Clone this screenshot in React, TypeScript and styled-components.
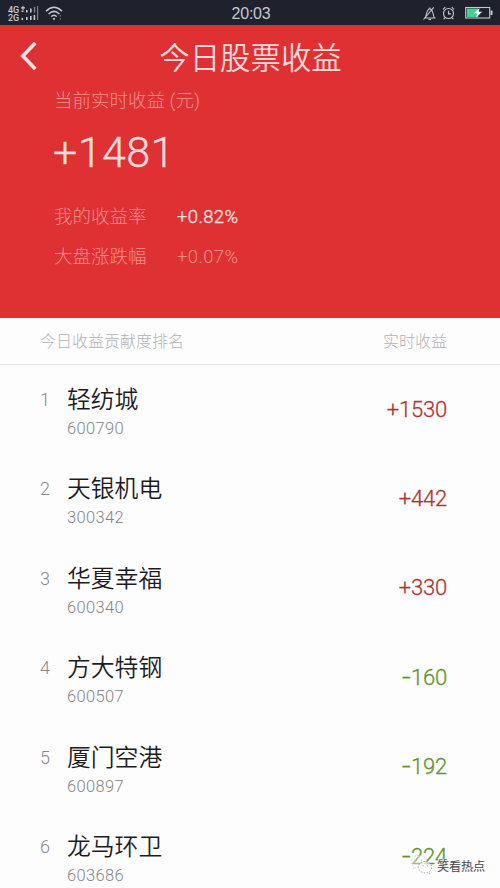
import React from "react";
import styled, { createGlobalStyle } from "styled-components";

const Global = createGlobalStyle`
  * { box-sizing: border-box; }
  html, body { margin: 0; padding: 0; overflow: hidden; }
  body { font-family: Roboto, "Noto Sans CJK SC", sans-serif; background: #fefdfe; }
`;

const Screen = styled.main`
  position: relative;
  width: 500px;
  height: 888px;
  overflow: hidden;
  display: flex;
  flex-direction: column;
  background: #fefdfe;
`;

const StatusBar = styled.header`
  flex: none;
  height: 25px;
  display: grid;
  grid-template-columns: 1fr auto 1fr;
  align-items: center;
  padding: 2px 6px 0 8px;
  background: #1f222d;
  color: #c5c8d0;
`;

const StatusGroup = styled.div<{ $end?: boolean }>`
  display: flex;
  align-items: center;
  justify-content: ${(p) => (p.$end ? "flex-end" : "flex-start")};
`;

const Networks = styled.div`
  display: flex;
  flex-direction: column;
  font: 500 9px/8px Roboto, sans-serif;
  width: 13px;
`;

const Clock = styled.time`
  padding-top: 1px;
  font: 400 16px/22px "Liberation Sans", sans-serif;
  letter-spacing: -0.25px;
`;

const Hero = styled.section`
  flex: none;
  height: 293px;
  background: #df3033;
  color: #ffdcdc;
`;

const TitleBar = styled.div`
  height: 64px;
  display: grid;
  grid-template-columns: 60px 1fr 60px;
  align-items: center;
`;

const BackButton = styled.button`
  display: flex;
  border: 0;
  padding: 0 0 2px 20px;
  background: none;
`;

const Title = styled.h1`
  margin: 4px 0 0 1px;
  text-align: center;
  font-size: 30.4px;
  line-height: 40px;
  font-weight: 350;
  white-space: nowrap;
`;

const Summary = styled.div`
  display: flex;
  flex-direction: column;
  padding-left: 54px;
`;

const SummaryLabel = styled.div`
  height: 22px;
  font-size: 18.5px;
  line-height: 24px;
  font-weight: 300;
  color: #f58f8b;
`;

const Total = styled.div`
  margin: 16px 0 0 -1px;
  height: 50px;
  font-size: 43px;
  line-height: 50px;
  font-weight: 300;
  letter-spacing: 0.4px;
  -webkit-text-stroke: 0.4px #ffdcdc;
`;

const Rates = styled.dl`
  margin: 20px 0 0;
  display: grid;
  grid-template-columns: 123px 1fr;
  grid-auto-rows: 40px;
  align-items: center;
`;

const RateLabel = styled.dt`
  font-size: 18.5px;
  line-height: 24px;
  font-weight: 300;
  color: #f58f8b;
`;

const RateValue = styled.dd<{ $bright?: boolean }>`
  margin: 0;
  font-size: 18.4px;
  line-height: 24px;
  letter-spacing: 0.4px;
  font-weight: 300;
  color: ${(p) => (p.$bright ? "#ffe3e1" : "#f5918c")};
  -webkit-text-stroke: ${(p) => (p.$bright ? "0.4px" : "0")} #ffe3e1;
`;

const ListHead = styled.div`
  flex: none;
  height: 47px;
  display: flex;
  justify-content: space-between;
  align-items: center;
  padding: 0 53px 2px 40px;
  border-bottom: 1px solid #e3e3e6;
  font-size: 16px;
  font-weight: 300;
  color: #b2b2b5;
`;

const List = styled.ol`
  margin: 0;
  padding: 0;
  list-style: none;
`;

const Row = styled.li`
  height: 89.4px;
  display: grid;
  grid-template-columns: 27px 1fr auto;
  padding: 0 53px 0 40px;
`;

const Rank = styled.span`
  padding-top: 24px;
  font-size: 18px;
  line-height: 22px;
  font-weight: 300;
  color: #88888b;
`;

const Stock = styled.div`
  padding-top: 19px;
`;

const StockName = styled.div`
  height: 32px;
  font-size: 23.8px;
  line-height: 32px;
  font-weight: 350;
  color: #1c1c1f;
`;

const StockCode = styled.div`
  margin-top: 3px;
  font-size: 16.5px;
  line-height: 20px;
  font-weight: 300;
  letter-spacing: 0.35px;
  color: #858588;
`;

const Profit = styled.div<{ $loss: boolean }>`
  display: flex;
  align-self: center;
  font-size: 22px;
  line-height: 26px;
  font-weight: 300;
  letter-spacing: -0.2px;
  color: ${(p) => (p.$loss ? "#639528" : "#b43132")};
  -webkit-text-stroke: 0.3px ${(p) => (p.$loss ? "#639528" : "#b43132")};
`;

const Sign = styled.span<{ $loss: boolean }>`
  font-size: ${(p) => (p.$loss ? "18px" : "22px")};
  font-weight: ${(p) => (p.$loss ? 400 : 300)};
`;

const Watermark = styled.div`
  position: absolute;
  left: 410px;
  top: 853px;
  display: flex;
  align-items: center;
  gap: 4px;
`;

const WatermarkText = styled.span`
  padding-top: 4px;
  font-size: 12px;
  line-height: 20px;
  font-weight: 400;
  color: #4a4a4c;
  text-shadow: -1px -1px 0 #fff, 1px 0 0 #ddd;
`;

const SignalIcon = () => (
  <svg width="18" height="15" viewBox="0 0 18 15" fill="#c5c8d0">
    <path d="M0 1.2h4v1.2H0zM1.4 0h1.2v4H1.4zM.5 4.5h2V6h-2zM5 4h1.6v2.4H5zM9 2.5h1.6v3.9H9zM.5 12h1.6v2H.5zM5 11h1.6v3H5zM9 10h1.6v4H9zM12.6 9h1.6v5h-1.6z" />
    <path d="M12.8.8h1.5v5.6h-1.5zM16 0h1.2v14H16z" opacity=".55" />
  </svg>
);

const WifiIcon = () => (
  <svg width="18" height="15" viewBox="0 0 18 15" fill="none" stroke="#c5c8d0" strokeWidth="1.5">
    <path d="M1 5.2Q9-2.6 17 5.2M3.6 8Q9 2.8 14.4 8M6.3 10.6Q9 8 11.7 10.6" />
    <circle cx="9" cy="12.8" r="1.1" fill="#c5c8d0" stroke="none" />
    <path d="M15.3 9v1.5M15.3 12v1.5" strokeWidth="1" opacity=".6" />
  </svg>
);

const StatusIcons = () => (
  <svg width="72" height="16" viewBox="0 0 72 16" fill="none" stroke="#c5c8d0" strokeWidth="1.1">
    <path d="M2 12H13.500M3.200 11.700C5 9 4 3.700 7.800 2.800 11.600 3.700 10.600 9 12.400 11.700M7.800 2.800V1.500M6.500 13.500h2.600M1.500 13.500 11.800 1.300" />
    <circle cx="26.500" cy="7.500" r="5" />
    <path d="M26.500 4.700v3.200H29M21 3.400l2.300-2.300M32 3.400l-2.300-2.300M23 11.700l-1.300 1.500M30 11.700l1.300 1.500" />
    <rect x="43.700" y="1.500" width="24" height="10.500" />
    <path d="M69.500 4.500V9" strokeWidth="2" />
    <path d="M44.800 2.500h11.500V11H44.800z" fill="#4acd91" stroke="none" />
    <path d="M57.500 2 52 7.300h3.500l-1.300 4.200 6-5.700h-3.400z" fill="#f4ffff" stroke="none" />
  </svg>
);

const BackIcon = () => (
  <svg width="18" height="30" viewBox="0 0 18 30" fill="none" stroke="#ffdfdf" strokeWidth="3.7">
    <path d="M15.3 2 2.8 15l12.5 13" />
  </svg>
);

const ChatIcon = () => (
  <svg width="23" height="22" viewBox="0 0 23 22" fill="none" stroke="#999" strokeWidth=".8" strokeDasharray="1.5 1.5">
    <path d="M9 1.500c-4.600 0-8 2.800-8 6.300 0 2 1.100 3.800 2.900 5L3.200 15l2.700-1.300c1 .3 2 .5 3.100.5 4.600 0 8-2.800 8-6.400S13.600 1.500 9 1.500Z" fill="#fff" fillOpacity=".4" stroke="#c5cfba" />
    <path d="M15 7.500c-3.700 0-6.700 2.600-6.700 5.700s3 5.700 6.700 5.700c.8 0 1.600-.1 2.400-.3l2.200 1.200-.6-2c1.700-1 2.700-2.700 2.700-4.600 0-3.100-3-5.700-6.700-5.700Z" fill="#fff" fillOpacity=".55" />
    <g fill="#999" stroke="none">
      <circle cx="6.500" cy="6" r=".6" />
      <circle cx="11.500" cy="6" r=".6" />
      <circle cx="13" cy="11.800" r=".6" />
      <circle cx="17.200" cy="11.800" r=".6" />
    </g>
  </svg>
);

const WifiSlot = styled.span`
  display: flex;
  margin-left: 6px;
`;

const stocks = [
  { name: "轻纺城", code: "600790", profit: 1530 },
  { name: "天银机电", code: "300342", profit: 442 },
  { name: "华夏幸福", code: "600340", profit: 330 },
  { name: "方大特钢", code: "600507", profit: -160 },
  { name: "厦门空港", code: "600897", profit: -192 },
  { name: "龙马环卫", code: "603686", profit: -224 },
];

export default function App() {
  return (
    <>
      <Global />
      <Screen>
        <StatusBar>
          <StatusGroup>
            <Networks>
              <span>4G</span>
              <span>2G</span>
            </Networks>
            <SignalIcon />
            <WifiSlot>
              <WifiIcon />
            </WifiSlot>
          </StatusGroup>
          <Clock>20:03</Clock>
          <StatusGroup $end>
            <StatusIcons />
          </StatusGroup>
        </StatusBar>
        <Hero>
          <TitleBar>
            <BackButton aria-label="返回">
              <BackIcon />
            </BackButton>
            <Title>今日股票收益</Title>
          </TitleBar>
          <Summary>
            <SummaryLabel>当前实时收益 (元)</SummaryLabel>
            <Total>+1481</Total>
            <Rates>
              <RateLabel>我的收益率</RateLabel>
              <RateValue $bright>+0.82%</RateValue>
              <RateLabel>大盘涨跌幅</RateLabel>
              <RateValue>+0.07%</RateValue>
            </Rates>
          </Summary>
        </Hero>
        <ListHead>
          <span>今日收益贡献度排名</span>
          <span>实时收益</span>
        </ListHead>
        <List>
          {stocks.map((s, i) => (
            <Row key={s.code}>
              <Rank>{i + 1}</Rank>
              <Stock>
                <StockName>{s.name}</StockName>
                <StockCode>{s.code}</StockCode>
              </Stock>
              <Profit $loss={s.profit < 0}>
                <Sign $loss={s.profit < 0}>{s.profit < 0 ? "−" : "+"}</Sign>
                {Math.abs(s.profit)}
              </Profit>
            </Row>
          ))}
        </List>
        <Watermark>
          <ChatIcon />
          <WatermarkText>笑看热点</WatermarkText>
        </Watermark>
      </Screen>
    </>
  );
}
